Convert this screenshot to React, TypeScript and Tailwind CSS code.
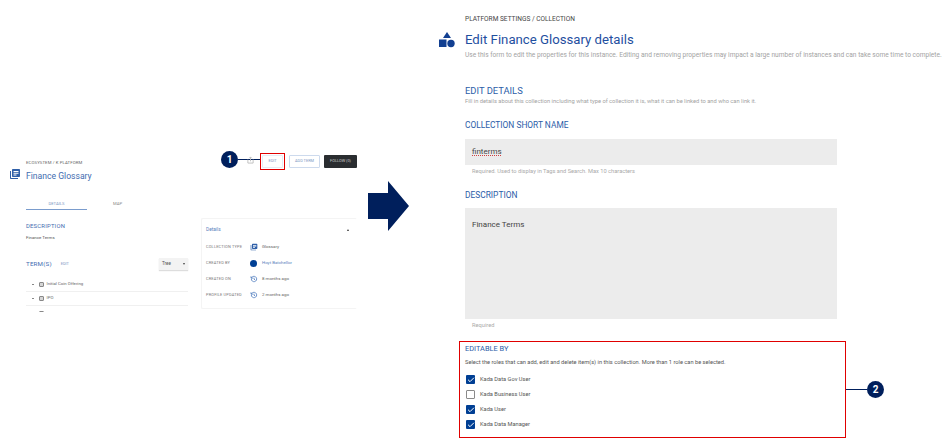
import { Check } from "lucide-react";

function GlossaryIcon({ className }: { className: string }) {
  return (
    <svg viewBox="0 0 24 24" fill="#2f5fa8" className={`shrink-0 ${className}`}>
      <path d="M2 6H4V20H18V22H4C2.9 22 2 21.1 2 20V6Z" />
      <path d="M8 2H20C21.1 2 22 2.9 22 4V16C22 17.1 21.1 18 20 18H8C6.9 18 6 17.1 6 16V4C6 2.9 6.9 2 8 2ZM9 6V8H19V6H9ZM9 9.5V11.5H19V9.5H9ZM9 13V15H15V13H9Z" fillRule="evenodd" />
    </svg>
  );
}

function HistoryIcon() {
  return (
    <svg viewBox="0 0 24 24" fill="none" stroke="#4a78bd" strokeWidth="2.4" className="h-[8px] w-[8px]">
      <path d="M4 12a8 8 0 1 0 2.5-5.8L3 9.5" />
      <path d="M3 4v5.5h5.5M12 8v4.5l3 2" />
    </svg>
  );
}

function NumberBadge({ value }: { value: number }) {
  return (
    <div className="flex h-[17px] w-[17px] shrink-0 items-center justify-center rounded-full bg-[#001f5c] text-[10px] font-bold leading-none text-white">
      {value}
    </div>
  );
}

function DetailRow({ label, icon, value, link }: { label: string; icon: React.ReactNode; value: string; link?: boolean }) {
  return (
    <div className="flex h-[16px] items-center">
      <div className="w-[44px] text-[3.9px] tracking-[0.2px] text-[#777]">{label}</div>
      <div className="flex w-[12px] items-center">{icon}</div>
      <div className={`text-[4.4px] ${link ? "text-[#5b82bd]" : "text-[#666]"}`}>{value}</div>
    </div>
  );
}

function TermRow({ name, line }: { name: string; line?: boolean }) {
  return (
    <div className={`flex h-[14px] items-center pl-[6px] ${line ? "border-b border-[#f0f0f0]" : ""}`}>
      <div className="mr-[5px] h-[1.5px] w-[1.5px] rounded-full bg-[#777]" />
      <div className="mr-[3px] h-[5px] w-[5px] rounded-[1px] border border-[#888] bg-[#d5d5d5]" />
      <div className="text-[4.3px] text-[#666]">{name}</div>
    </div>
  );
}

function LeftPanel() {
  return (
    <div className="flex h-[312px] w-[357px] shrink-0 flex-col overflow-hidden pt-[151px]">
      <div className="flex items-start justify-between">
        <div className="flex pl-[9px] pt-[9px]">
          <GlossaryIcon className="mt-[8px] h-[12px] w-[12px]" />
          <div className="ml-[5px]">
            <div className="text-[4.3px] leading-[6px] tracking-[0.1px] text-[#666]">ECOSYSTEM / K PLATFORM</div>
            <div className="mt-[3px] text-[8.6px] leading-[14px] text-[#3f6cb0]">Finance Glossary</div>
          </div>
        </div>
        <div className="flex items-center">
          <div className="mb-[3px] flex items-center">
            <NumberBadge value={1} />
            <div className="relative h-[1.5px] w-[22px] bg-[#001f5c]">
              <svg viewBox="0 0 8 9" fill="none" stroke="#bbb" strokeWidth="1" className="absolute left-[9px] top-[-3px] h-[8px] w-[7px]">
                <path d="M1 4V8H7V4M4 6V1M2.5 2.5L4 1L5.5 2.5" />
              </svg>
            </div>
          </div>
          <div className="flex h-[17px] w-[25px] items-center justify-center border border-[#e00000]">
            <div className="flex h-[13px] w-[21px] items-center justify-center rounded-[1px] border border-[#e6ecf6] text-[3.9px] text-[#7d97c4]">EDIT</div>
          </div>
          <div className="ml-[4px] flex h-[13px] w-[31px] items-center justify-center rounded-[1px] border border-[#cddaed] text-[3.9px] text-[#7d97c4]">ADD TERM</div>
          <div className="ml-[4px] flex h-[13px] w-[33px] items-center justify-center rounded-[1px] bg-[#2a2d30] text-[3.9px] text-[#ccc]">FOLLOW (0)</div>
        </div>
      </div>
      <div className="ml-[26px] mt-[16px] flex h-[11px] w-[331px] items-start">
        <div className="h-[11px] w-[61px] border-b border-[#7a9ccd] text-center text-[4.2px] leading-[10px] text-[#7d97c4]">DETAILS</div>
        <div className="w-[61px] text-center text-[4.2px] leading-[10px] text-[#888]">MAP</div>
      </div>
      <div className="flex pl-[26px] pt-[8px]">
        <div className="w-[162px] pt-[3px]">
          <div className="text-[5.9px] leading-[10px] tracking-[0.2px] text-[#3f6cb0]">DESCRIPTION</div>
          <div className="mt-[3px] text-[4.4px] leading-[7px] text-[#555]">Finance Terms</div>
          <div className="mt-[17px] flex items-center">
            <div className="text-[6.2px] leading-[12px] tracking-[0.2px] text-[#3f6cb0]">TERM(S)</div>
            <div className="ml-[9px] text-[3.9px] text-[#7d97c4]">EDIT</div>
            <div className="ml-auto flex h-[12px] w-[29px] items-center justify-between bg-[#f3f3f3] px-[3px] text-[4.6px] text-[#555] shadow-[0_1px_1px_#ddd]">
              Tree
              <div className="h-0 w-0 border-x-[1.5px] border-t-[2px] border-x-transparent border-t-[#444]" />
            </div>
          </div>
          <div className="mt-[8px]">
            <TermRow name="Initial Coin Offering" line />
            <TermRow name="IPO" line />
            <TermRow name="" />
          </div>
        </div>
        <div className="ml-[13px] h-[91px] w-[156px] rounded-[2px] border border-[#f4f4f4] border-r-transparent px-[4px] pt-[6px]">
          <div className="flex h-[10px] items-center justify-between pr-[3px]">
            <div className="text-[4.8px] text-[#5b82bd]">Details</div>
            <div className="h-0 w-0 border-x-[1.5px] border-b-[2px] border-x-transparent border-b-[#333]" />
          </div>
          <div className="mt-[4px]">
            <DetailRow label="COLLECTION TYPE" icon={<GlossaryIcon className="h-[8px] w-[8px]" />} value="Glossary" />
            <DetailRow label="CREATED BY" icon={<div className="h-[7px] w-[7px] rounded-full bg-[#003f94]" />} value="Hoyt Batchellor" link />
            <DetailRow label="CREATED ON" icon={<HistoryIcon />} value="8 months ago" />
            <DetailRow label="PROFILE UPDATED" icon={<HistoryIcon />} value="2 months ago" />
          </div>
        </div>
      </div>
    </div>
  );
}

function BigArrow() {
  return (
    <div className="ml-[11px] flex h-[440px] w-[41px] shrink-0 items-start pt-[181px]">
      <svg viewBox="0 0 41 50" className="h-[50px] w-[41px]">
        <path d="M0 12H20V0L41 25L20 50V38H0Z" fill="#001f5c" />
      </svg>
    </div>
  );
}

function RoleOption({ label, checked }: { label: string; checked: boolean }) {
  return (
    <div className="flex h-[15px] items-center">
      {checked ? (
        <div className="flex h-[9px] w-[9px] items-center justify-center rounded-[1px] bg-[#003f94]">
          <Check className="h-[8px] w-[8px] text-white" strokeWidth={3} />
        </div>
      ) : (
        <div className="h-[9px] w-[9px] rounded-[1px] border border-[#8a8a8a]" />
      )}
      <div className="ml-[5px] text-[5.7px] text-[#555]">{label}</div>
    </div>
  );
}

function SectionLabel({ text }: { text: string }) {
  return <div className="text-[8.4px] leading-[12px] text-[#2b5da8]">{text}</div>;
}

function RightPanel() {
  return (
    <div className="flex w-[535px] shrink-0 flex-col pt-[15px]">
      <div className="pl-[56px] text-[6.55px] leading-[8px] text-[#444]">PLATFORM SETTINGS / COLLECTION</div>
      <div className="mt-[7px] flex pl-[30px]">
        <svg viewBox="0 0 16 16" className="mt-[2px] h-[16px] w-[16px] shrink-0" fill="#123f91">
          <path d="M8 0L12 6H4Z" />
          <rect x="0" y="7.5" width="7.5" height="7.5" />
          <circle cx="12" cy="11.5" r="3.7" />
        </svg>
        <div className="ml-[10px]">
          <div className="text-[13.2px] leading-[20px] text-[#1f4f9f]">Edit Finance Glossary details</div>
          <div className="whitespace-nowrap text-[6.6px] leading-[10px] text-[#a3a3a3]">
            Use this form to edit the properties for this instance. Editing and removing properties may impact a large number of instances and can take some time to complete.
          </div>
        </div>
      </div>
      <div className="mt-[25px] pl-[56px]">
        <div className="text-[9.4px] leading-[12px] text-[#2b5da8]">EDIT DETAILS</div>
        <div className="text-[5.75px] leading-[8px] text-[#a3a3a3]">
          Fill in details about this collection including what type of collection it is, what it can be linked to and who can link it.
        </div>
        <div className="mt-[14px]">
          <SectionLabel text="COLLECTION SHORT NAME" />
        </div>
        <div className="mt-[8px] flex h-[26px] w-[372px] items-center bg-[#ececec] px-[7px] text-[8px] text-[#444]">
          <span className="underline decoration-[#d04040] decoration-dotted underline-offset-1">finterms</span>
        </div>
        <div className="mt-[2px] pl-[7px] text-[5.7px] leading-[8px] text-[#aaa]">Required. Used to display in Tags and Search. Max 10 characters</div>
        <div className="mt-[14px]">
          <SectionLabel text="DESCRIPTION" />
        </div>
        <div className="mt-[7px] h-[111px] w-[372px] bg-[#ececec] px-[7px] pt-[11px] text-[8px] leading-[12px] text-[#444]">Finance Terms</div>
        <div className="mt-[2px] pl-[7px] text-[5.7px] leading-[8px] text-[#aaa]">Required</div>
      </div>
      <div className="mt-[12px] flex items-center pl-[50px]">
        <div className="h-[97px] w-[387px] border border-[#e00000] px-[5px] pt-[1px]">
          <div className="text-[7.4px] leading-[12px] text-[#2b5da8]">EDITABLE BY</div>
          <div className="mt-[3px] text-[5.7px] leading-[9px] text-[#555]">
            Select the roles that can add, edit and delete item(s) in this collection. More than 1 role can be selected.
          </div>
          <div className="mt-[5px] pl-[1px]">
            <RoleOption label="Kada Data Gov User" checked />
            <RoleOption label="Kada Business User" checked={false} />
            <RoleOption label="Kada User" checked />
            <RoleOption label="Kada Data Manager" checked />
          </div>
        </div>
        <div className="h-[1.5px] w-[21px] bg-[#001f5c]" />
        <NumberBadge value={2} />
      </div>
    </div>
  );
}

export default function App() {
  return (
    <div className="flex h-[440px] w-[944px] items-start overflow-hidden bg-white font-['Roboto',sans-serif]">
      <LeftPanel />
      <BigArrow />
      <RightPanel />
    </div>
  );
}
